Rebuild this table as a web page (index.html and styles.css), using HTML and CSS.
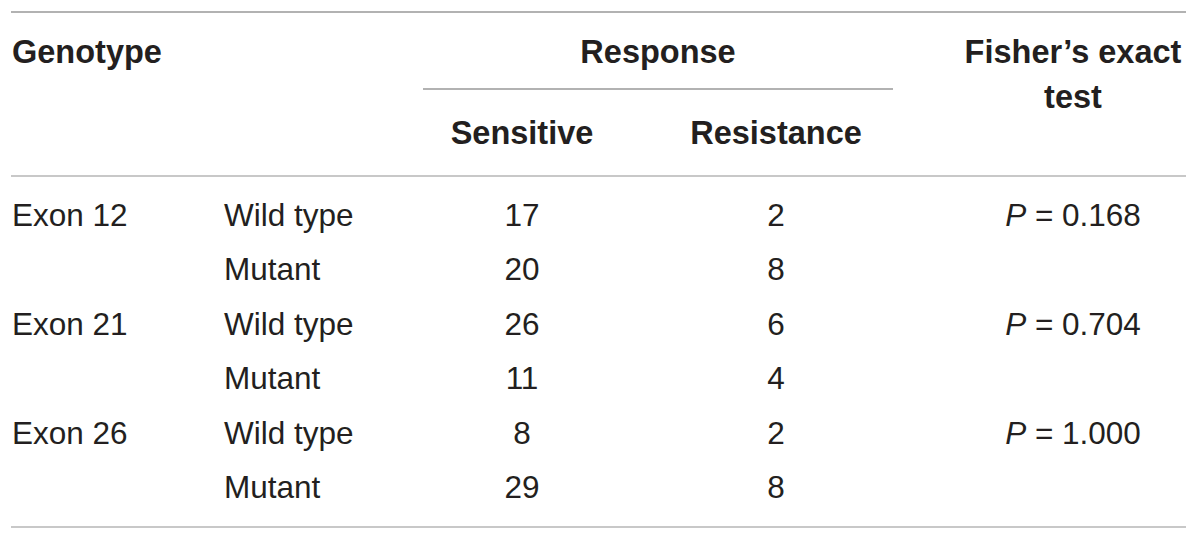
FILE: index.html
```html
<!DOCTYPE html>
<html>
<head>
<meta charset="utf-8">
<link rel="stylesheet" href="styles.css">
</head>
<body>
<table class="data">
  <colgroup>
    <col class="c1"><col class="c2"><col class="c3"><col class="c4"><col class="c5">
  </colgroup>
  <thead>
    <tr class="h1">
      <th class="left top" rowspan="2">Genotype</th>
      <th class="top" rowspan="2"></th>
      <th class="resp" colspan="2">Response</th>
      <th class="fisher top" rowspan="2">Fisher’s exact<br>test</th>
    </tr>
    <tr class="h2">
      <th class="sens">Sensitive</th>
      <th class="res">Resistance</th>
    </tr>
  </thead>
  <tbody>
    <tr class="first"><td>Exon 12</td><td>Wild type</td><td class="n">17</td><td class="r">2</td><td class="p"><i>P</i> = 0.168</td></tr>
    <tr><td></td><td>Mutant</td><td class="n">20</td><td class="r">8</td><td class="p"></td></tr>
    <tr><td>Exon 21</td><td>Wild type</td><td class="n">26</td><td class="r">6</td><td class="p"><i>P</i> = 0.704</td></tr>
    <tr><td></td><td>Mutant</td><td class="n">11</td><td class="r">4</td><td class="p"></td></tr>
    <tr><td>Exon 26</td><td>Wild type</td><td class="n">8</td><td class="r">2</td><td class="p"><i>P</i> = 1.000</td></tr>
    <tr class="last"><td></td><td>Mutant</td><td class="n">29</td><td class="r">8</td><td class="p"></td></tr>
  </tbody>
</table>
</body>
</html>
```
FILE: styles.css
```css
html, body {
  margin: 0;
  padding: 0;
  background: #ffffff;
}
body {
  font-family: "Liberation Sans", Arial, sans-serif;
  color: #231f20;
}
.data {
  margin: 11px 0 0 11px;
  width: 1175px;
  table-layout: fixed;
  border-collapse: separate;
  border-spacing: 0;
  border-top: 2px solid #b2b2b2;
  border-bottom: 2px solid #c8c8c8;
}
.c1 { width: 213px; }
.c2 { width: 199px; }
.c3 { width: 198px; }
.c4 { width: 272px; }
.c5 { width: 293px; }

th {
  font-size: 32.5px;
  font-weight: bold;
  line-height: 45px;
  padding: 0;
  text-align: center;
  vertical-align: top;
  white-space: nowrap;
}
th.left { text-align: left; padding-left: 1px; }
.h1 th { padding-top: 17px; }
.h1 th.resp {
  padding-bottom: 13px;
  border-bottom: 2px solid #b2b2b2;
}
.h2 th { padding-top: 21px; padding-bottom: 19px; }
th.res { padding-left: 38px; }
th.fisher { padding-left: 67px; }

td {
  font-size: 31.5px;
  line-height: 54.4px;
  padding: 0;
  white-space: nowrap;
}
td:first-child { padding-left: 1px; }
td.n { text-align: center; }
td.r { text-align: center; padding-left: 38px; }
td.p { text-align: center; padding-left: 67px; }
tbody tr.first td {
  border-top: 2px solid #c8c8c8;
  padding-top: 11px;
}
tbody tr.last td { padding-bottom: 12px; }
```
